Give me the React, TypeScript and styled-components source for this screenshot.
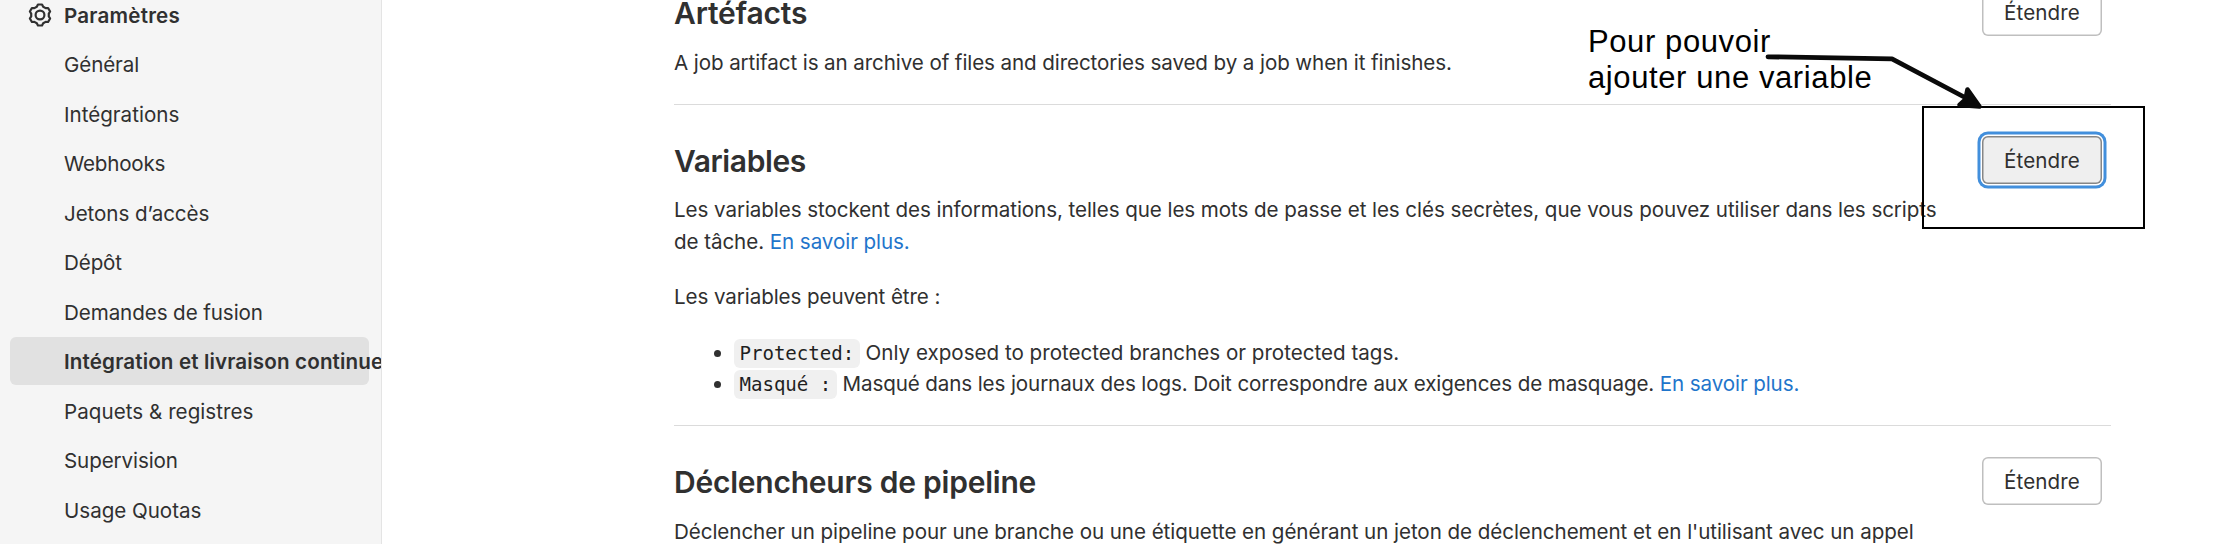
import React from "react";
import styled, { createGlobalStyle } from "styled-components";

const GlobalStyle = createGlobalStyle`
  *, *::before, *::after { box-sizing: border-box; }
  body {
    margin: 0;
    background: #fff;
    color: #303030;
    font-family: Inter, "Liberation Sans", sans-serif;
    font-size: 20.6px;
    overflow: hidden;
  }
`;

const Page = styled.div`
  position: relative;
  display: flex;
  width: 2239px;
  height: 544px;
  overflow: hidden;
`;

const Sidebar = styled.nav`
  flex: none;
  width: 382px;
  padding: 0 12px 0 10px;
  background: #f5f5f5;
  border-right: 1px solid #e4e4e4;
  overflow: hidden;
`;

const NavList = styled.ul`
  display: flex;
  flex-direction: column;
  gap: 1.75px;
  list-style: none;
  margin: -9.4px 0 0;
  padding: 0;
`;

const NavItem = styled.li<{ $active?: boolean; $heading?: boolean; $spacing: number }>`
  display: flex;
  flex: none;
  align-items: center;
  height: 47.75px;
  padding-left: ${(p) => (p.$heading ? "18px" : "54px")};
  padding-top: ${(p) => (p.$heading ? "3px" : "2px")};
  border-radius: 6px;
  background: ${(p) => (p.$active ? "#e1e1e1" : "transparent")};
  font-weight: ${(p) => (p.$active || p.$heading ? 600 : 400)};
  letter-spacing: ${(p) => p.$spacing}px;
  white-space: nowrap;
`;

const GearSvg = styled.svg`
  flex: none;
  width: 24px;
  height: 24px;
  margin: -1px 12px 0 0;
`;

const Main = styled.main`
  flex: none;
  width: 1437px;
  margin: -11.7px 0 0 292px;
`;

const Section = styled.section`
  display: grid;
  grid-template-columns: 1290px 120px;
  justify-content: space-between;
  align-items: start;
  padding: 0 9px 25.6px 0;

  & + & {
    border-top: 1px solid #dbdbdb;
    padding-top: 31px;
  }
`;

const Heading = styled.h4<{ $spacing: number }>`
  margin: 7px 0 15.4px;
  font-size: 30px;
  line-height: 36px;
  font-weight: 600;
  letter-spacing: ${(p) => p.$spacing}px;
`;

const Paragraph = styled.p<{ $spacing?: number }>`
  margin: 0;
  line-height: 31.7px;
  letter-spacing: ${(p) => p.$spacing ?? -0.07}px;

  & + & { margin-top: 22.8px; }
`;

const Link = styled.a`
  color: #1f75cb;
  text-decoration: none;
`;

const BulletList = styled.ul`
  list-style: none;
  margin: 24.4px 0 1.1px;
  padding: 0 0 0 40px;
`;

const BulletItem = styled.li<{ $spacing: number }>`
  display: flex;
  align-items: center;
  height: 31px;
  line-height: 31px;
  letter-spacing: ${(p) => p.$spacing}px;

  &::before {
    content: "";
    width: 7px;
    height: 7px;
    margin: 2px 13px 0 0;
    border-radius: 50%;
    background: #303030;
  }
`;

const Code = styled.code`
  padding: 3px 5.4px;
  border-radius: 6px;
  background: #f0f0f0;
  color: #1f1f1f;
  font-family: "DejaVu Sans Mono", monospace;
  font-size: 19.1px;
  line-height: 1;
  letter-spacing: 0;
  white-space: pre;
`;

const ExpandButton = styled.button<{ $focused?: boolean }>`
  width: 120px;
  height: 48px;
  padding: 0;
  border: 0;
  border-radius: 6px;
  background: ${(p) => (p.$focused ? "#efefef" : "#fff")};
  box-shadow: ${(p) =>
    p.$focused
      ? "inset 0 0 0 1.5px #868686, 0 0 0 1.5px #fff, 0 0 0 4.5px #428fdc"
      : "inset 0 0 0 1.5px #bfbfbf"};
  color: #303030;
  font: inherit;
  letter-spacing: 0.1px;
`;

const Callout = styled.div`
  position: absolute;
  top: 24px;
  left: 1588px;
  color: #000;
  font-family: "Liberation Sans", Arial, sans-serif;
  font-size: 31px;
  line-height: 36.3px;
  letter-spacing: 0.6px;
  white-space: nowrap;
`;

const Frame = styled.div`
  position: absolute;
  top: 106px;
  left: 1922px;
  width: 223px;
  height: 123px;
  border: 2px solid #000;
`;

const Arrow = styled.svg`
  position: absolute;
  top: 40px;
  left: 1750px;
  width: 250px;
  height: 80px;
`;

const gearPoints = [0, 60, 120, 180, 240, 300]
  .flatMap((a) => [
    [10.7, a - 11],
    [10.7, a + 11],
    [8.9, a + 21],
    [8.9, a + 39],
  ])
  .map(([r, deg]) => {
    const t = ((deg - 90) * Math.PI) / 180;
    return `${(12 + r * Math.cos(t)).toFixed(2)},${(12 + r * Math.sin(t)).toFixed(2)}`;
  })
  .join(" ");

const GearIcon = () => (
  <GearSvg viewBox="0 0 24 24" fill="none" stroke="#303030" strokeWidth="2.2" strokeLinejoin="round">
    <polygon points={gearPoints} />
    <circle cx="12" cy="12" r="4.4" />
  </GearSvg>
);

const navItems = [
  { label: "Général", spacing: -0.12 },
  { label: "Intégrations", spacing: 0 },
  { label: "Webhooks", spacing: -0.22 },
  { label: "Jetons d’accès", spacing: -0.07 },
  { label: "Dépôt", spacing: -0.12 },
  { label: "Demandes de fusion", spacing: -0.09 },
  { label: "Intégration et livraison continue", spacing: 0.14, active: true },
  { label: "Paquets & registres", spacing: 0.04 },
  { label: "Supervision", spacing: -0.1 },
  { label: "Usage Quotas", spacing: -0.03 },
];

export default function App() {
  return (
    <>
      <GlobalStyle />
      <Page>
        <Sidebar>
          <NavList>
            <NavItem $heading $spacing={0.2}>
              <GearIcon />
              Paramètres
            </NavItem>
            {navItems.map((item) => (
              <NavItem key={item.label} $active={item.active} $spacing={item.spacing}>
                {item.label}
              </NavItem>
            ))}
          </NavList>
        </Sidebar>

        <Main>
          <Section>
            <div>
              <Heading $spacing={-0.18}>Artéfacts</Heading>
              <Paragraph $spacing={-0.1}>
                A job artifact is an archive of files and directories saved by a job when it finishes.
              </Paragraph>
            </div>
            <ExpandButton>Étendre</ExpandButton>
          </Section>

          <Section>
            <div>
              <Heading $spacing={-0.4}>Variables</Heading>
              <Paragraph $spacing={-0.075}>
                Les variables stockent des informations, telles que les mots de passe et les clés
                secrètes, que vous pouvez utiliser dans les scripts de tâche.{" "}
                <Link>En savoir plus.</Link>
              </Paragraph>
              <Paragraph $spacing={-0.09}>Les variables peuvent être :</Paragraph>
              <BulletList>
                <BulletItem $spacing={0}>
                  <span>
                    <Code>Protected:</Code> Only exposed to protected branches or protected tags.
                  </span>
                </BulletItem>
                <BulletItem $spacing={-0.11}>
                  <span>
                    <Code>Masqué :</Code> Masqué dans les journaux des logs. Doit correspondre aux
                    exigences de masquage. <Link>En savoir plus.</Link>
                  </span>
                </BulletItem>
              </BulletList>
            </div>
            <ExpandButton $focused>Étendre</ExpandButton>
          </Section>

          <Section>
            <div>
              <Heading $spacing={-0.23}>Déclencheurs de pipeline</Heading>
              <Paragraph $spacing={-0.065}>
                Déclencher un pipeline pour une branche ou une étiquette en générant un jeton de
                déclenchement et en l'utilisant avec un appel
              </Paragraph>
            </div>
            <ExpandButton>Étendre</ExpandButton>
          </Section>
        </Main>

        <Callout>
          Pour pouvoir
          <br />
          ajouter une variable
        </Callout>
        <Frame />
        <Arrow viewBox="0 0 250 80">
          <path
            d="M18 16.8 L142 18.8 L216 58"
            fill="none"
            stroke="#0a0a0a"
            strokeWidth="4.8"
            strokeLinecap="round"
            strokeLinejoin="round"
          />
          <path
            d="M217.5 49.5 L229.5 66.5 L209.5 65 L215.5 59.5 Z"
            fill="#0a0a0a"
            stroke="#0a0a0a"
            strokeWidth="4.6"
            strokeLinejoin="round"
          />
        </Arrow>
      </Page>
    </>
  );
}
